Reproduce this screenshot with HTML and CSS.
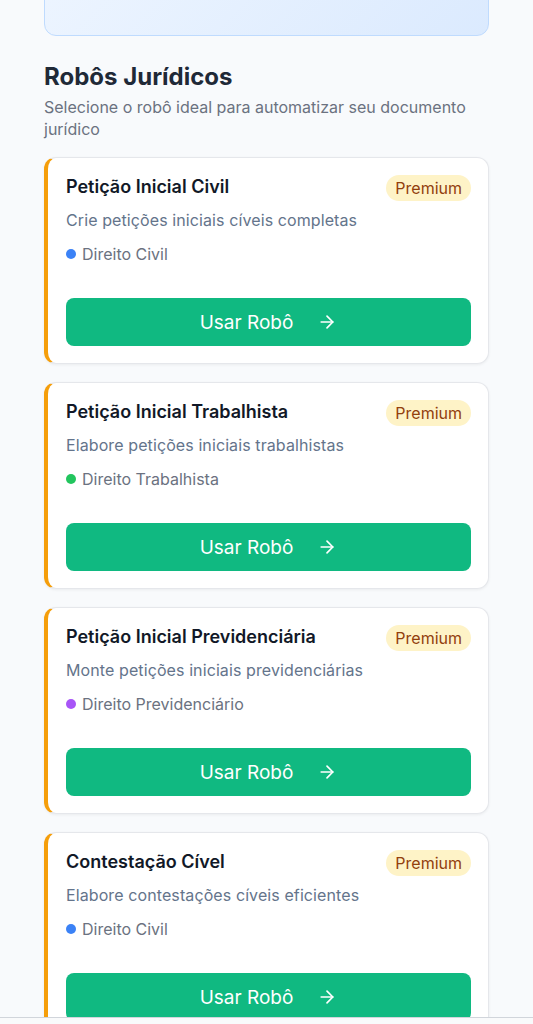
FILE: index.html
```html
<!DOCTYPE html>
<html lang="pt-BR">
<head>
    <meta charset="UTF-8">
    <meta name="viewport" content="width=device-width, initial-scale=1.0">
    <title>Robôs Jurídicos</title>
    <link rel="stylesheet" href="styles.css">
</head>
<body>
    <div class="page">
        <div class="intro-box">
            <p class="intro-title">Automatize seus documentos</p>
            <p class="intro-text">Gere peças jurídicas em poucos minutos</p>
        </div>

        <h2 class="section-title">Robôs Jurídicos</h2>
        <p class="section-sub">Selecione o robô ideal para automatizar seu documento jurídico</p>

        <div class="robot-list">
            <div class="robot-card">
                <div class="card-head">
                    <h3 class="card-title">Petição Inicial Civil</h3>
                    <span class="badge">Premium</span>
                </div>
                <p class="card-desc">Crie petições iniciais cíveis completas</p>
                <p class="card-area"><span class="dot dot-blue"></span>Direito Civil</p>
                <button class="use-btn">Usar Robô
                    <svg width="20" height="20" viewBox="0 0 24 24" fill="none" stroke="currentColor" stroke-width="2" stroke-linecap="round" stroke-linejoin="round"><path d="M5 12h14"/><path d="M12 5l7 7-7 7"/></svg>
                </button>
            </div>

            <div class="robot-card">
                <div class="card-head">
                    <h3 class="card-title">Petição Inicial Trabalhista</h3>
                    <span class="badge">Premium</span>
                </div>
                <p class="card-desc">Elabore petições iniciais trabalhistas</p>
                <p class="card-area"><span class="dot dot-green"></span>Direito Trabalhista</p>
                <button class="use-btn">Usar Robô
                    <svg width="20" height="20" viewBox="0 0 24 24" fill="none" stroke="currentColor" stroke-width="2" stroke-linecap="round" stroke-linejoin="round"><path d="M5 12h14"/><path d="M12 5l7 7-7 7"/></svg>
                </button>
            </div>

            <div class="robot-card">
                <div class="card-head">
                    <h3 class="card-title">Petição Inicial Previdenciária</h3>
                    <span class="badge">Premium</span>
                </div>
                <p class="card-desc">Monte petições iniciais previdenciárias</p>
                <p class="card-area"><span class="dot dot-purple"></span>Direito Previdenciário</p>
                <button class="use-btn">Usar Robô
                    <svg width="20" height="20" viewBox="0 0 24 24" fill="none" stroke="currentColor" stroke-width="2" stroke-linecap="round" stroke-linejoin="round"><path d="M5 12h14"/><path d="M12 5l7 7-7 7"/></svg>
                </button>
            </div>

            <div class="robot-card">
                <div class="card-head">
                    <h3 class="card-title">Contestação Cível</h3>
                    <span class="badge">Premium</span>
                </div>
                <p class="card-desc">Elabore contestações cíveis eficientes</p>
                <p class="card-area"><span class="dot dot-blue"></span>Direito Civil</p>
                <button class="use-btn">Usar Robô
                    <svg width="20" height="20" viewBox="0 0 24 24" fill="none" stroke="currentColor" stroke-width="2" stroke-linecap="round" stroke-linejoin="round"><path d="M5 12h14"/><path d="M12 5l7 7-7 7"/></svg>
                </button>
            </div>
        </div>
    </div>

    <div class="bottom-bar"></div>
</body>
</html>
```

FILE: styles.css
```css
body {
    margin: 0;
    background-color: #f8fafc;
    font-family: Inter, 'Noto Sans', sans-serif;
    color: #1f2937;
    overflow: hidden;
}
.page {
    padding: 0 44px;
    margin-top: -82px;
}
.intro-box {
    height: 118px;
    box-sizing: border-box;
    padding: 20px 24px;
    border: 1px solid #bfdbfe;
    border-radius: 12px;
    background: linear-gradient(135deg, #eff6ff, #dbeafe);
}
.intro-title {
    margin: 0;
    font-size: 18px;
    font-weight: 600;
    color: #1e3a8a;
}
.intro-text {
    margin: 6px 0 0;
    font-size: 15px;
    color: #1d4ed8;
}
.section-title {
    margin: 25px 0 0;
    font-size: 24px;
    line-height: 32px;
    font-weight: 700;
    color: #1f2937;
}
.section-sub {
    margin: 3px 0 0;
    font-size: 16px;
    line-height: 22px;
    color: #6b7280;
}
.robot-list {
    margin-top: 17px;
    display: flex;
    flex-direction: column;
    gap: 18px;
}
.robot-card {
    background-color: #fff;
    border: 1px solid #e5e7eb;
    border-left: 4px solid #f59e0b;
    border-radius: 12px;
    padding: 17px 17px 17px 18px;
    box-shadow: 0 1px 3px rgba(0, 0, 0, 0.06);
}
.card-head {
    display: flex;
    justify-content: space-between;
    align-items: flex-start;
}
.card-title {
    margin: 0;
    font-size: 18px;
    line-height: 24px;
    font-weight: 600;
    color: #111827;
}
.badge {
    height: 26px;
    line-height: 26px;
    padding: 0 9px;
    border-radius: 13px;
    background-color: #fef3c7;
    color: #92400e;
    font-size: 16px;
    font-weight: 400;
}
.card-desc {
    margin: 7px 0 0;
    font-size: 16px;
    line-height: 24px;
    color: #64748b;
    letter-spacing: 0.1px;
}
.card-area {
    margin: 10px 0 0;
    font-size: 16px;
    line-height: 24px;
    color: #6b7280;
    display: flex;
    align-items: center;
}
.dot {
    width: 10px;
    height: 10px;
    border-radius: 50%;
    margin-right: 6px;
}
.dot-blue { background-color: #3b82f6; }
.dot-green { background-color: #22c55e; }
.dot-purple { background-color: #a855f7; }
.use-btn {
    margin-top: 32px;
    width: 100%;
    height: 48px;
    border: none;
    border-radius: 8px;
    background-color: #10b981;
    color: #fff;
    font-family: inherit;
    font-size: 19px;
    font-weight: 400;
    display: flex;
    align-items: center;
    justify-content: center;
    gap: 24px;
}
.bottom-bar {
    position: fixed;
    left: 0;
    right: 0;
    bottom: 0;
    height: 6px;
    background-color: #f9fafb;
    border-top: 1px solid #d1d5db;
}
```
